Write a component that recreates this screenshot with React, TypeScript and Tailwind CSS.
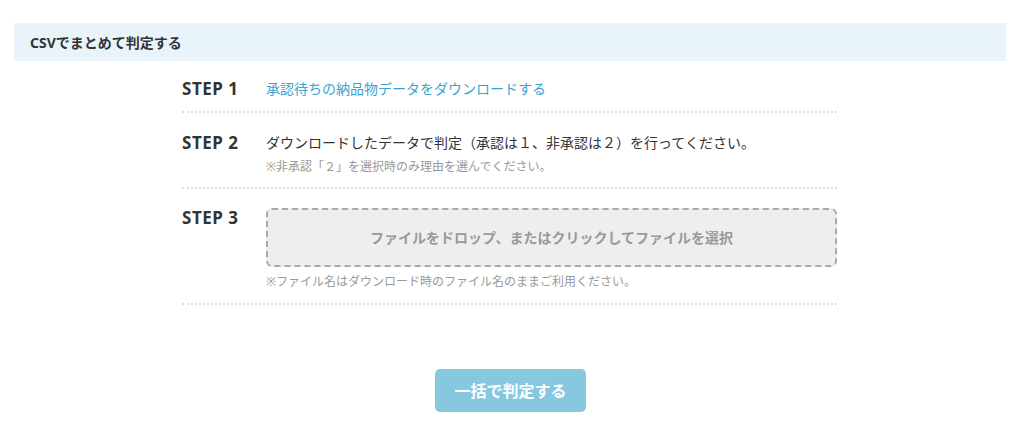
import React from "react";

const font = {
  fontFamily: '"Noto Sans", "Noto Sans CJK JP", sans-serif',
};

function StepRow({
  label,
  children,
  className = "",
}: {
  label: string;
  children: React.ReactNode;
  className?: string;
}) {
  return (
    <div className={`flex items-start border-b-2 border-dotted border-[#dddddd] ${className}`}>
      <div className="w-[84px] shrink-0 text-[17px] font-bold leading-[20px] tracking-[0.03em] text-[#333333]">
        {label}
      </div>
      <div className="flex-1 text-[14px] leading-[20px]">{children}</div>
    </div>
  );
}

export default function App() {
  return (
    <div className="min-h-[441px] bg-white pt-[23px]" style={font}>
      <div className="ml-[14px] mr-[16px] flex h-[38px] items-center bg-[#e8f4f9] px-4">
        <h2 className="text-[14px] font-bold text-[#333333]">CSVでまとめて判定する</h2>
      </div>

      <div className="ml-[182px] w-[655px]">
        <StepRow label="STEP 1" className="pb-[12px] pt-[18px]">
          <a className="block text-[14px] leading-[20px] text-[#3ba3d0]" href="#">
            承認待ちの納品物データをダウンロードする
          </a>
        </StepRow>

        <StepRow label="STEP 2" className="pb-[11px] pt-[20px]">
          <p className="text-[14px] leading-[20px] text-[#333333]">
            ダウンロードしたデータで判定（承認は１、非承認は２）を行ってください。
          </p>
          <p className="mt-[5px] text-[12px] leading-[18px] text-[#999999]">
            ※非承認「２」を選択時のみ理由を選んでください。
          </p>
        </StepRow>

        <StepRow label="STEP 3" className="pb-[12px] pt-[19px]">
          <div className="flex h-[59px] items-center justify-center rounded-[6px] border-2 border-dashed border-[#aaaaaa] bg-[#eeeeee]">
            <span className="text-[14px] font-bold text-[#999999]">
              ファイルをドロップ、またはクリックしてファイルを選択
            </span>
          </div>
          <p className="mt-[6px] text-[12px] leading-[18px] text-[#999999]">
            ※ファイル名はダウンロード時のファイル名のままご利用ください。
          </p>
        </StepRow>
      </div>

      <div className="mt-[64px] flex justify-center">
        <button
          type="button"
          className="ml-[-1px] h-[43px] w-[151px] rounded-[5px] bg-[#85c8e0] text-[16px] font-bold text-white"
        >
          一括で判定する
        </button>
      </div>
    </div>
  );
}
